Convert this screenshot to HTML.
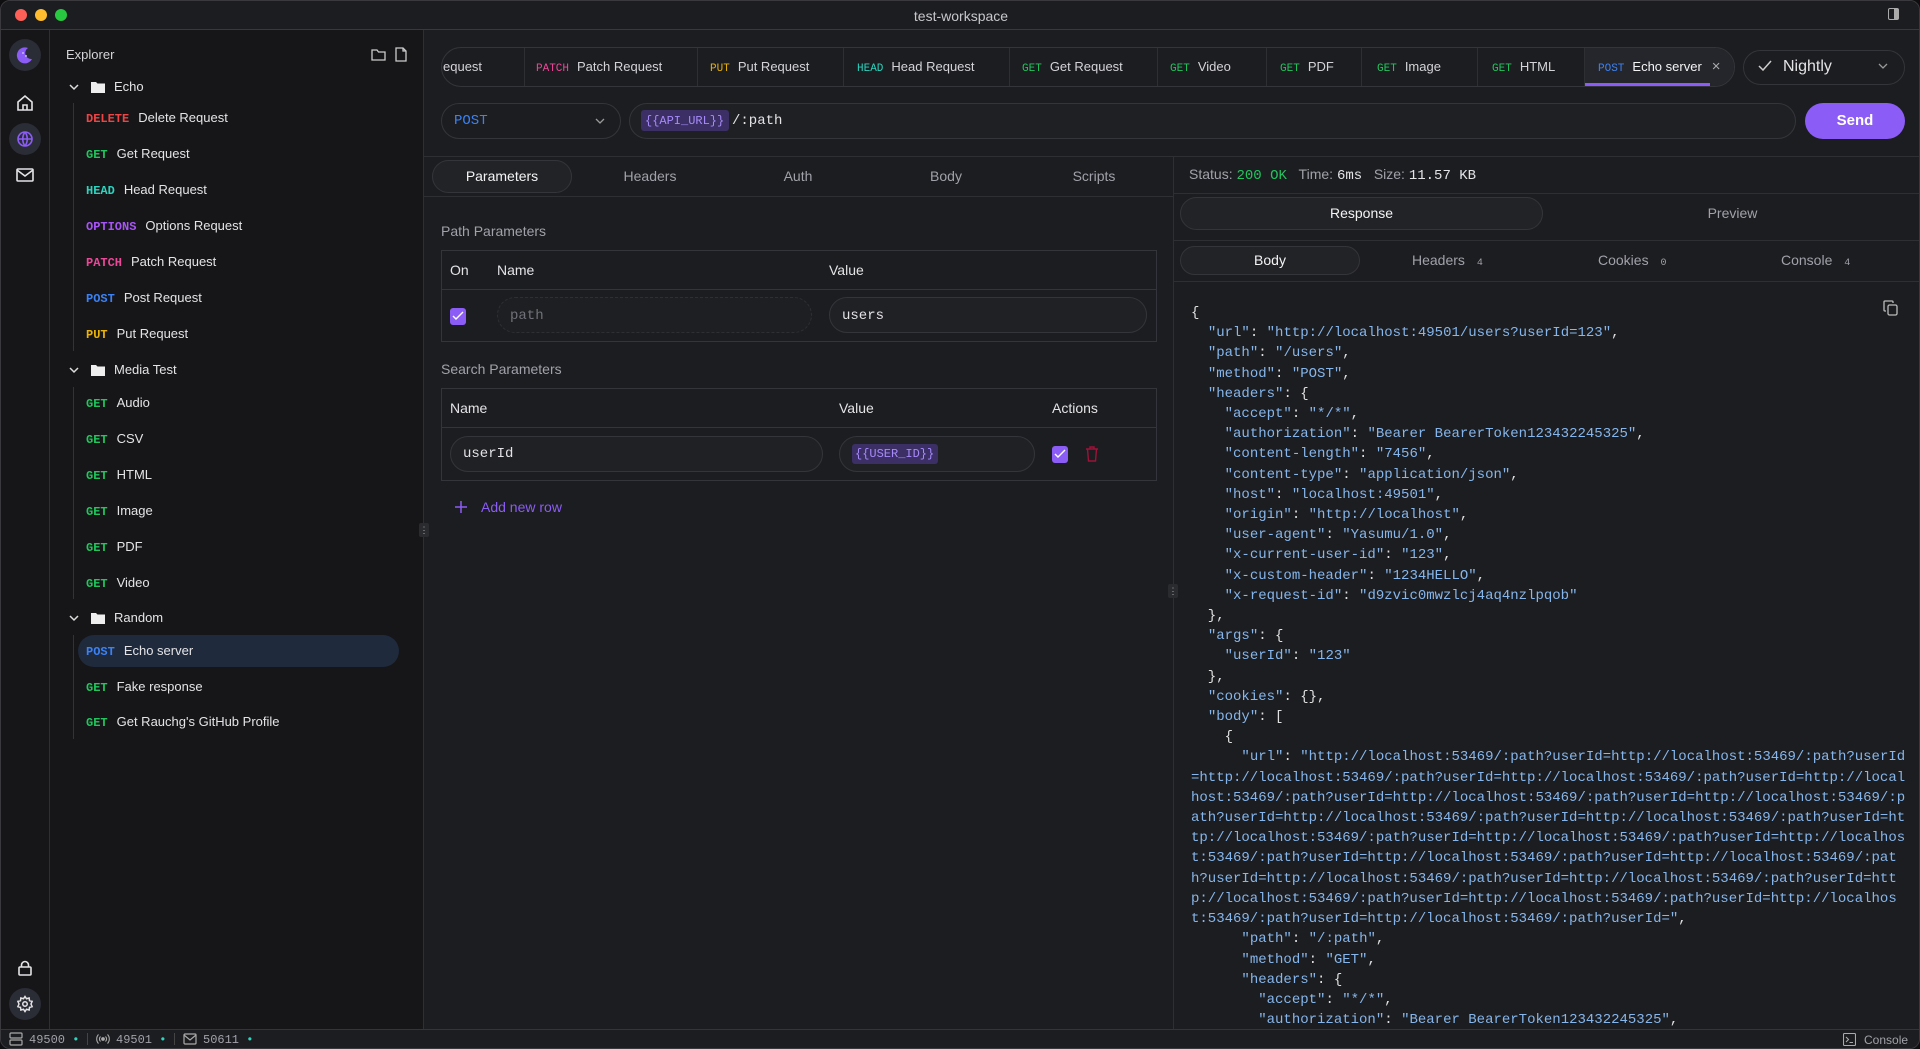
<!DOCTYPE html>
<html><head><meta charset="utf-8"><style>
*{box-sizing:border-box;margin:0;padding:0}
body{width:1920px;height:1049px;background:#0e0e10;font-family:"Liberation Sans",sans-serif;color:#e4e4e7;overflow:hidden;position:relative}
.a{position:absolute}
.mono{font-family:"Liberation Mono",monospace}
.t{white-space:nowrap;line-height:20px;height:20px}
.m{font-family:"Liberation Mono",monospace;font-size:12px;font-weight:bold}
.del{color:#ef4444}.get{color:#22c55e}.head{color:#2dd4bf}.opt{color:#a855f7}.pat{color:#ec4899}.post{color:#3b82f6}.put{color:#eab308}
.it{font-size:13px;color:#e4e4e7}
.bd{border:1px solid #34353a}
.pill{border:1px solid #34353a;border-radius:20px;background:#202125}
.tab{position:absolute;top:0;height:39px;border-right:1px solid #2e2f33;font-size:13px;line-height:38px;white-space:nowrap;color:#d4d4d8}
.tab .m{font-size:11px;margin-right:8px;font-weight:normal}
pre{font-family:"Liberation Mono",monospace;font-size:14px;line-height:20.2px;color:#e0e0e0}
pre b{font-weight:normal;color:#86b6ec}
.chk{width:16px;height:17px;border-radius:3px;background:#8b5cf6}
</style></head><body>
<div class="a" style="left:0;top:0;width:1920px;height:1049px;background:#1c1d20;border-radius:10px;overflow:hidden;border:1px solid #3a3a3e">
<div class="a" style="left:0;top:0;width:1920px;height:29px;background:#1c1d20;border-bottom:1px solid #38393d"></div>
<div class="a" style="left:14px;top:8px;width:12px;height:12px;border-radius:6px;background:#fe5f57"></div>
<div class="a" style="left:34px;top:8px;width:12px;height:12px;border-radius:6px;background:#febc2e"></div>
<div class="a" style="left:54px;top:8px;width:12px;height:12px;border-radius:6px;background:#28c840"></div>
<div class="a t" style="left:0;width:1920px;top:5px;text-align:center;font-size:14px;color:#c8c8cc">test-workspace</div>
<div class="a" style="left:1887px;top:7px;width:11px;height:12px;border:1.5px solid #aaa;border-radius:2px"><div style="position:absolute;right:0;top:0;width:4px;height:100%;background:#aaa"></div></div>

<div class="a" style="left:0;top:29px;width:49px;height:999px;background:#161618;border-right:1px solid #2e2f33"></div>
<div class="a" style="left:8px;top:38px;width:32px;height:32px;border-radius:16px;background:#2a2c36"></div>
<svg class="a" style="left:14px;top:44px" width="20" height="20" viewBox="0 0 20 20"><path d="M13 3a8 8 0 1 0 4 11a6 6 0 0 1-4-11z" fill="#8b5cf6"/><circle cx="8" cy="8" r="1" fill="#c4b5fd"/><circle cx="11" cy="11" r="1" fill="#c4b5fd"/></svg>
<svg class="a" style="left:15px;top:93px" width="18" height="18" viewBox="0 0 18 18" fill="none" stroke="#e4e4e7" stroke-width="1.6"><path d="M2 8L9 2l7 6v8H2z"/><path d="M7 16v-5h4v5"/></svg>
<div class="a" style="left:8px;top:122px;width:32px;height:32px;border-radius:16px;background:#2a2c36"></div>
<svg class="a" style="left:15px;top:129px" width="18" height="18" viewBox="0 0 18 18" fill="none" stroke="#8b5cf6" stroke-width="1.6"><circle cx="9" cy="9" r="7"/><path d="M2 9h14M9 2c-3 4-3 10 0 14M9 2c3 4 3 10 0 14"/></svg>
<svg class="a" style="left:15px;top:166px" width="18" height="16" viewBox="0 0 18 16" fill="none" stroke="#e4e4e7" stroke-width="1.6"><rect x="1" y="2" width="16" height="12" rx="1"/><path d="M1 3l8 6l8-6"/></svg>
<svg class="a" style="left:16px;top:959px" width="16" height="16" viewBox="0 0 16 16" fill="none" stroke="#e4e4e7" stroke-width="1.6"><rect x="2" y="7" width="12" height="8" rx="1"/><path d="M4.5 7V5a3.5 3.5 0 0 1 7 0v2"/></svg>
<div class="a" style="left:8px;top:987px;width:32px;height:32px;border-radius:16px;background:#2a2c36"></div>
<svg class="a" style="left:15px;top:994px" width="18" height="18" viewBox="0 0 24 24" fill="none" stroke="#e4e4e7" stroke-width="2"><circle cx="12" cy="12" r="3"/><path d="M12 2l2 3 3.5-1 .5 3.5 3.5 1-1.5 3.5 1.5 3.5-3.5 1-.5 3.5-3.5-1-2 3-2-3-3.5 1-.5-3.5-3.5-1L4 12 2.5 8.5l3.5-1L6.5 4 10 5z"/></svg>

<div class="a" style="left:49px;top:29px;width:374px;height:999px;background:#161618;border-right:1px solid #2e2f33"></div>
<div class="a t" style="left:65px;top:44px;font-size:13px;color:#d4d4d8">Explorer</div>
<svg class="a" style="left:370px;top:47px" width="15" height="13" viewBox="0 0 15 13" fill="none" stroke="#ccc" stroke-width="1.3"><path d="M1 2h5l1.5 2H14v8H1z"/></svg>
<svg class="a" style="left:394px;top:46px" width="12" height="15" viewBox="0 0 12 15" fill="none" stroke="#ccc" stroke-width="1.3"><path d="M1 1h7l3 3v10H1z"/><path d="M8 1v3h3"/></svg>
<div class="a" style="left:72px;top:102px;width:1px;height:248px;background:#333"></div>
<div class="a" style="left:72px;top:386px;width:1px;height:212px;background:#333"></div>
<div class="a" style="left:72px;top:634px;width:1px;height:104px;background:#333"></div>
<div class="a" style="left:77px;top:634px;width:321px;height:32px;border-radius:16px;background:#1f2a3d"></div>

<svg class="a" style="left:67px;top:82px" width="12" height="8" viewBox="0 0 12 8" fill="none" stroke="#ddd" stroke-width="1.5"><path d="M2 2l4 4 4-4"/></svg>
<svg class="a" style="left:90px;top:80px" width="14" height="12" viewBox="0 0 14 12"><path d="M0 1h5l1.5 1.5H14V12H0z" fill="#eee"/></svg>
<div class="a t it" style="left:113px;top:76px">Echo</div>
<div class="a t" style="left:85px;top:107px"><span class="m del">DELETE</span><span class="it" style="margin-left:9px">Delete Request</span></div>
<div class="a t" style="left:85px;top:143px"><span class="m get">GET</span><span class="it" style="margin-left:9px">Get Request</span></div>
<div class="a t" style="left:85px;top:179px"><span class="m head">HEAD</span><span class="it" style="margin-left:9px">Head Request</span></div>
<div class="a t" style="left:85px;top:215px"><span class="m opt">OPTIONS</span><span class="it" style="margin-left:9px">Options Request</span></div>
<div class="a t" style="left:85px;top:251px"><span class="m pat">PATCH</span><span class="it" style="margin-left:9px">Patch Request</span></div>
<div class="a t" style="left:85px;top:287px"><span class="m post">POST</span><span class="it" style="margin-left:9px">Post Request</span></div>
<div class="a t" style="left:85px;top:323px"><span class="m put">PUT</span><span class="it" style="margin-left:9px">Put Request</span></div>

<svg class="a" style="left:67px;top:365px" width="12" height="8" viewBox="0 0 12 8" fill="none" stroke="#ddd" stroke-width="1.5"><path d="M2 2l4 4 4-4"/></svg>
<svg class="a" style="left:90px;top:363px" width="14" height="12" viewBox="0 0 14 12"><path d="M0 1h5l1.5 1.5H14V12H0z" fill="#eee"/></svg>
<div class="a t it" style="left:113px;top:359px">Media Test</div>
<div class="a t" style="left:85px;top:392px"><span class="m get">GET</span><span class="it" style="margin-left:9px">Audio</span></div>
<div class="a t" style="left:85px;top:428px"><span class="m get">GET</span><span class="it" style="margin-left:9px">CSV</span></div>
<div class="a t" style="left:85px;top:464px"><span class="m get">GET</span><span class="it" style="margin-left:9px">HTML</span></div>
<div class="a t" style="left:85px;top:500px"><span class="m get">GET</span><span class="it" style="margin-left:9px">Image</span></div>
<div class="a t" style="left:85px;top:536px"><span class="m get">GET</span><span class="it" style="margin-left:9px">PDF</span></div>
<div class="a t" style="left:85px;top:572px"><span class="m get">GET</span><span class="it" style="margin-left:9px">Video</span></div>

<svg class="a" style="left:67px;top:613px" width="12" height="8" viewBox="0 0 12 8" fill="none" stroke="#ddd" stroke-width="1.5"><path d="M2 2l4 4 4-4"/></svg>
<svg class="a" style="left:90px;top:611px" width="14" height="12" viewBox="0 0 14 12"><path d="M0 1h5l1.5 1.5H14V12H0z" fill="#eee"/></svg>
<div class="a t it" style="left:113px;top:607px">Random</div>
<div class="a t" style="left:85px;top:640px"><span class="m post">POST</span><span class="it" style="margin-left:9px">Echo server</span></div>
<div class="a t" style="left:85px;top:676px"><span class="m get">GET</span><span class="it" style="margin-left:9px">Fake response</span></div>
<div class="a t" style="left:85px;top:711px"><span class="m get">GET</span><span class="it" style="margin-left:9px">Get Rauchg's GitHub Profile</span></div>

<div class="a" style="left:440px;top:46px;width:1294px;height:40px;border:1px solid #34353a;border-radius:20px;overflow:hidden;background:#1c1d20">
 <div class="tab" style="left:0;width:83px;padding-left:1px">equest</div>
 <div class="tab" style="left:83px;width:173px;padding-left:11px"><span class="m pat">PATCH</span>Patch Request</div>
 <div class="tab" style="left:256px;width:146px;padding-left:12px"><span class="m put">PUT</span>Put Request</div>
 <div class="tab" style="left:402px;width:166px;padding-left:13px"><span class="m head">HEAD</span>Head Request</div>
 <div class="tab" style="left:568px;width:148px;padding-left:12px"><span class="m get">GET</span>Get Request</div>
 <div class="tab" style="left:716px;width:109px;padding-left:12px"><span class="m get">GET</span>Video</div>
 <div class="tab" style="left:825px;width:95px;padding-left:13px"><span class="m get">GET</span>PDF</div>
 <div class="tab" style="left:920px;width:116px;padding-left:15px"><span class="m get">GET</span>Image</div>
 <div class="tab" style="left:1036px;width:107px;padding-left:14px"><span class="m get">GET</span>HTML</div>
 <div class="tab" style="left:1143px;width:151px;padding-left:13px;background:#25262b;border-right:none;color:#f4f4f5"><span class="m post">POST</span>Echo server<span style="margin-left:10px;color:#aaa;font-size:15px">×</span></div>
 <div class="a" style="left:1143px;top:35px;width:125px;height:3px;background:#8b5cf6"></div>
</div>
<div class="a pill" style="left:1742px;top:49px;width:162px;height:35px;border-radius:18px;background:#1c1d20"></div>
<svg class="a" style="left:1757px;top:59px" width="14" height="12" viewBox="0 0 14 12" fill="none" stroke="#ccc" stroke-width="1.5"><path d="M1 6l4 4 8-9"/></svg>
<div class="a t" style="left:1782px;top:56px;font-size:16px;color:#e4e4e7">Nightly</div>
<svg class="a" style="left:1876px;top:61px" width="12" height="8" viewBox="0 0 12 8" fill="none" stroke="#999" stroke-width="1.3"><path d="M2 2l4 4 4-4"/></svg>

<div class="a pill" style="left:440px;top:102px;width:180px;height:36px;border-radius:18px;background:#1c1d20"></div>
<div class="a t mono" style="left:453px;top:110px;font-size:14px;color:#3b82f6">POST</div>
<svg class="a" style="left:593px;top:116px" width="12" height="8" viewBox="0 0 12 8" fill="none" stroke="#999" stroke-width="1.3"><path d="M2 2l4 4 4-4"/></svg>
<div class="a pill" style="left:628px;top:102px;width:1167px;height:36px;border-radius:18px;background:#1f2023"></div>
<div class="a" style="left:640px;top:109px;width:88px;height:21px;border-radius:3px;background:#3b2f66"></div>
<div class="a t mono" style="left:644px;top:110px;font-size:12px;color:#a78bfa">{{API_URL}}</div>
<div class="a t mono" style="left:731px;top:110px;font-size:14px;color:#e4e4e7">/:path</div>
<div class="a" style="left:1804px;top:102px;width:100px;height:36px;border-radius:18px;background:#8b5cf6"></div>
<div class="a t" style="left:1804px;width:100px;top:110px;text-align:center;font-size:15px;color:#fff;font-weight:bold">Send</div>

<div class="a" style="left:423px;top:155px;width:1497px;height:1px;background:#2e2f33"></div>
<div class="a" style="left:1172px;top:155px;width:1px;height:873px;background:#2e2f33"></div>

<div class="a pill" style="left:431px;top:159px;width:140px;height:33px;border-radius:17px;background:#222327"></div>
<div class="a t" style="left:431px;width:140px;top:165px;text-align:center;font-size:14px;color:#f4f4f5">Parameters</div>
<div class="a t" style="left:589px;width:120px;top:165px;text-align:center;font-size:14px;color:#a1a1aa">Headers</div>
<div class="a t" style="left:737px;width:120px;top:165px;text-align:center;font-size:14px;color:#a1a1aa">Auth</div>
<div class="a t" style="left:885px;width:120px;top:165px;text-align:center;font-size:14px;color:#a1a1aa">Body</div>
<div class="a t" style="left:1033px;width:120px;top:165px;text-align:center;font-size:14px;color:#a1a1aa">Scripts</div>
<div class="a" style="left:423px;top:195px;width:749px;height:1px;background:#2e2f33"></div>

<div class="a t" style="left:440px;top:220px;font-size:14px;color:#a1a1aa">Path Parameters</div>
<div class="a bd" style="left:440px;top:249px;width:716px;height:92px"></div>
<div class="a" style="left:440px;top:288px;width:716px;height:1px;background:#34353a"></div>
<div class="a t" style="left:449px;top:259px;font-size:14px">On</div>
<div class="a t" style="left:496px;top:259px;font-size:14px">Name</div>
<div class="a t" style="left:828px;top:259px;font-size:14px">Value</div>
<div class="a chk" style="left:449px;top:307px"></div>
<svg class="a" style="left:451px;top:310px" width="12" height="10" viewBox="0 0 12 10" fill="none" stroke="#fff" stroke-width="1.4"><path d="M1 5l3 3 7-7"/></svg>
<div class="a" style="left:496px;top:296px;width:315px;height:36px;border-radius:18px;border:1px dashed #2e2f33;background:#1e1f22"></div>
<div class="a t mono" style="left:509px;top:305px;font-size:14px;color:#71717a">path</div>
<div class="a pill" style="left:828px;top:296px;width:318px;height:36px;border-radius:18px"></div>
<div class="a t mono" style="left:841px;top:305px;font-size:14px">users</div>

<div class="a t" style="left:440px;top:358px;font-size:14px;color:#a1a1aa">Search Parameters</div>
<div class="a bd" style="left:440px;top:387px;width:716px;height:93px"></div>
<div class="a" style="left:440px;top:426px;width:716px;height:1px;background:#34353a"></div>
<div class="a t" style="left:449px;top:397px;font-size:14px">Name</div>
<div class="a t" style="left:838px;top:397px;font-size:14px">Value</div>
<div class="a t" style="left:1051px;top:397px;font-size:14px">Actions</div>
<div class="a pill" style="left:449px;top:435px;width:373px;height:36px;border-radius:18px"></div>
<div class="a t mono" style="left:462px;top:443px;font-size:14px">userId</div>
<div class="a pill" style="left:838px;top:435px;width:196px;height:36px;border-radius:18px"></div>
<div class="a" style="left:851px;top:443px;width:86px;height:20px;border-radius:3px;background:#3b2f66"></div>
<div class="a t mono" style="left:854px;top:443px;font-size:12px;color:#a78bfa">{{USER_ID}}</div>
<div class="a chk" style="left:1051px;top:445px"></div>
<svg class="a" style="left:1053px;top:448px" width="12" height="10" viewBox="0 0 12 10" fill="none" stroke="#fff" stroke-width="1.4"><path d="M1 5l3 3 7-7"/></svg>
<svg class="a" style="left:1084px;top:445px" width="14" height="16" viewBox="0 0 14 16" fill="none" stroke="#9f1239" stroke-width="1.4"><path d="M1 3h12M5 3V1h4v2M2.5 3l1 12h7l1-12"/></svg>
<svg class="a" style="left:453px;top:499px" width="14" height="14" viewBox="0 0 14 14" stroke="#8b5cf6" stroke-width="1.5"><path d="M7 1v12M1 7h12"/></svg>
<div class="a t" style="left:480px;top:496px;font-size:14px;color:#8b5cf6">Add new row</div>

<div class="a" style="left:418px;top:522px;width:10px;height:14px;border-radius:2px;background:#2a2b2f;font-size:9px;color:#aaa;text-align:center;line-height:14px">⋮</div>
<div class="a" style="left:1167px;top:583px;width:10px;height:14px;border-radius:2px;background:#2a2b2f;font-size:9px;color:#aaa;text-align:center;line-height:14px">⋮</div>

<div class="a t" style="left:1188px;top:163px;font-size:14px;color:#a1a1aa">Status: <span class="mono" style="color:#22c55e">200 OK</span>&nbsp;&nbsp;&nbsp;Time: <span class="mono" style="color:#e4e4e7">6ms</span>&nbsp;&nbsp;&nbsp;Size: <span class="mono" style="color:#e4e4e7">11.57 KB</span></div>
<div class="a" style="left:1172px;top:192px;width:748px;height:1px;background:#2e2f33"></div>
<div class="a pill" style="left:1179px;top:196px;width:363px;height:33px;border-radius:17px;background:#222327"></div>
<div class="a t" style="left:1179px;width:363px;top:202px;text-align:center;font-size:14px;color:#f4f4f5">Response</div>
<div class="a t" style="left:1550px;width:363px;top:202px;text-align:center;font-size:14px;color:#a1a1aa">Preview</div>
<div class="a" style="left:1172px;top:239px;width:748px;height:1px;background:#2e2f33"></div>
<div class="a pill" style="left:1179px;top:245px;width:180px;height:29px;border-radius:15px;background:#222327"></div>
<div class="a t" style="left:1179px;width:180px;top:249px;text-align:center;font-size:14px;color:#f4f4f5">Body</div>
<div class="a t" style="left:1411px;top:249px;font-size:14px;color:#a1a1aa">Headers <span class="mono" style="font-size:10px;margin-left:8px">4</span></div>
<div class="a t" style="left:1597px;top:249px;font-size:14px;color:#a1a1aa">Cookies <span class="mono" style="font-size:10px;margin-left:8px">0</span></div>
<div class="a t" style="left:1780px;top:249px;font-size:14px;color:#a1a1aa">Console <span class="mono" style="font-size:10px;margin-left:8px">4</span></div>
<div class="a" style="left:1172px;top:280px;width:748px;height:1px;background:#2e2f33"></div>
<svg class="a" style="left:1882px;top:299px" width="15" height="16" viewBox="0 0 15 16" fill="none" stroke="#bbb" stroke-width="1.3"><rect x="5" y="5" width="9" height="10" rx="1.5"/><path d="M3 11H2a1 1 0 0 1-1-1V2a1 1 0 0 1 1-1h7a1 1 0 0 1 1 1v1"/></svg>
<pre class="a" style="left:1190px;top:302px">{
  <b>"url"</b>: <b>"http://localhost:49501/users?userId=123"</b>,
  <b>"path"</b>: <b>"/users"</b>,
  <b>"method"</b>: <b>"POST"</b>,
  <b>"headers"</b>: {
    <b>"accept"</b>: <b>"*/*"</b>,
    <b>"authorization"</b>: <b>"Bearer BearerToken123432245325"</b>,
    <b>"content-length"</b>: <b>"7456"</b>,
    <b>"content-type"</b>: <b>"application/json"</b>,
    <b>"host"</b>: <b>"localhost:49501"</b>,
    <b>"origin"</b>: <b>"http://localhost"</b>,
    <b>"user-agent"</b>: <b>"Yasumu/1.0"</b>,
    <b>"x-current-user-id"</b>: <b>"123"</b>,
    <b>"x-custom-header"</b>: <b>"1234HELLO"</b>,
    <b>"x-request-id"</b>: <b>"d9zvic0mwzlcj4aq4nzlpqob"</b>
  },
  <b>"args"</b>: {
    <b>"userId"</b>: <b>"123"</b>
  },
  <b>"cookies"</b>: {},
  <b>"body"</b>: [
    {
      <b>"url"</b>: <b>"http://localhost:53469/:path?userId=http://localhost:53469/:path?userId
=http://localhost:53469/:path?userId=http://localhost:53469/:path?userId=http://local
host:53469/:path?userId=http://localhost:53469/:path?userId=http://localhost:53469/:p
ath?userId=http://localhost:53469/:path?userId=http://localhost:53469/:path?userId=ht
tp://localhost:53469/:path?userId=http://localhost:53469/:path?userId=http://localhos
t:53469/:path?userId=http://localhost:53469/:path?userId=http://localhost:53469/:pat
h?userId=http://localhost:53469/:path?userId=http://localhost:53469/:path?userId=htt
p://localhost:53469/:path?userId=http://localhost:53469/:path?userId=http://localhos
t:53469/:path?userId=http://localhost:53469/:path?userId="</b>,
      <b>"path"</b>: <b>"/:path"</b>,
      <b>"method"</b>: <b>"GET"</b>,
      <b>"headers"</b>: {
        <b>"accept"</b>: <b>"*/*"</b>,
        <b>"authorization"</b>: <b>"Bearer BearerToken123432245325"</b>,</pre>

<div class="a" style="left:0;top:1028px;width:1920px;height:21px;background:#1c1d20;border-top:1px solid #34353a"></div>
<svg class="a" style="left:8px;top:1031px" width="14" height="14" viewBox="0 0 14 14" fill="none" stroke="#aaa" stroke-width="1.2"><rect x="1" y="1" width="12" height="5" rx="1"/><rect x="1" y="8" width="12" height="5" rx="1"/></svg>
<div class="a t mono" style="left:28px;top:1029px;font-size:12px;color:#a1a1aa">49500 <span style="color:#2dd4bf">•</span></div>
<div class="a" style="left:86px;top:1032px;width:1px;height:12px;background:#444"></div>
<svg class="a" style="left:95px;top:1032px" width="14" height="12" viewBox="0 0 14 12" fill="none" stroke="#aaa" stroke-width="1.1"><circle cx="7" cy="6" r="1.3" fill="#aaa"/><path d="M4.5 3.5a3.5 3.5 0 0 0 0 5M9.5 3.5a3.5 3.5 0 0 1 0 5M2.5 1.5a6.5 6.5 0 0 0 0 9M11.5 1.5a6.5 6.5 0 0 1 0 9"/></svg>
<div class="a t mono" style="left:115px;top:1029px;font-size:12px;color:#a1a1aa">49501 <span style="color:#2dd4bf">•</span></div>
<div class="a" style="left:173px;top:1032px;width:1px;height:12px;background:#444"></div>
<svg class="a" style="left:182px;top:1032px" width="14" height="12" viewBox="0 0 14 12" fill="none" stroke="#aaa" stroke-width="1.2"><rect x="1" y="1" width="12" height="10" rx="1"/><path d="M1 2l6 5 6-5"/></svg>
<div class="a t mono" style="left:202px;top:1029px;font-size:12px;color:#a1a1aa">50611 <span style="color:#2dd4bf">•</span></div>
<svg class="a" style="left:1842px;top:1032px" width="13" height="13" viewBox="0 0 13 13" fill="none" stroke="#aaa" stroke-width="1.1"><rect x="0.5" y="0.5" width="12" height="12" rx="1"/><path d="M3 4l2.5 2.5L3 9M6.5 9.5h3.5"/></svg>
<div class="a t" style="left:1863px;top:1029px;font-size:12px;color:#a1a1aa">Console</div>
</div>
</body></html>
